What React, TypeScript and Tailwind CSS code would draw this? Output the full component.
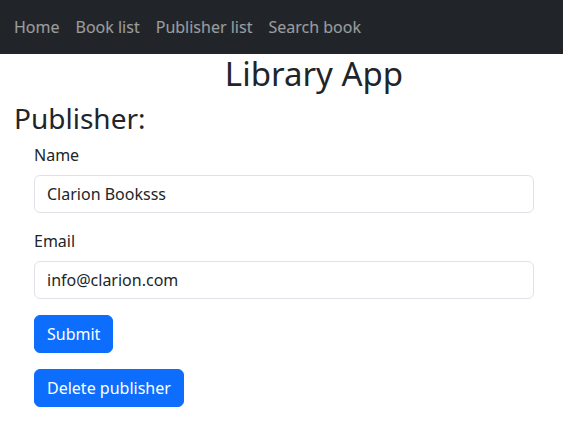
const navLinks = ["Home", "Book list", "Publisher list", "Search book"];

const App = () => {
  return (
    <div className="min-h-screen bg-white text-[#212529]" style={{ fontFamily: '"Noto Sans", "Open Sans", sans-serif' }}>
      <nav className="h-[54px] bg-[#212529] flex items-center pl-[6px]">
        {navLinks.map((link) => (
          <a key={link} href="#" className="px-2 text-base leading-6 text-white/55">
            {link}
          </a>
        ))}
      </nav>

      <h1 className="pl-[65px] mb-2 text-center text-[33px] leading-[1.2] font-normal">Library App</h1>

      <div className="px-[14px]">
        <h2 className="mb-2 text-[28px] leading-[1.2] font-normal">Publisher:</h2>

        <form className="pl-5 pr-[15px]" onSubmit={(e) => e.preventDefault()}>
          <div className="mb-4">
            <label className="block mb-2 text-base leading-6">Name</label>
            <input
              type="text"
              defaultValue="Clarion Booksss"
              className="block w-full h-[38px] px-3 text-base border border-[#dee2e6] rounded-md text-[#212529] outline-none"
            />
          </div>
          <div className="mb-4">
            <label className="block mb-2 text-base leading-6">Email</label>
            <input
              type="email"
              defaultValue="info@clarion.com"
              className="block w-full h-[38px] px-3 text-base border border-[#dee2e6] rounded-md text-[#212529] outline-none"
            />
          </div>
          <button type="submit" className="block h-[38px] px-3 text-base leading-6 text-white bg-[#0d6efd] border border-[#0d6efd] rounded-md">
            Submit
          </button>
          <button type="button" className="block mt-4 h-[38px] px-3 text-base leading-6 text-white bg-[#0d6efd] border border-[#0d6efd] rounded-md">
            Delete publisher
          </button>
        </form>
      </div>
    </div>
  );
};

export default App;
